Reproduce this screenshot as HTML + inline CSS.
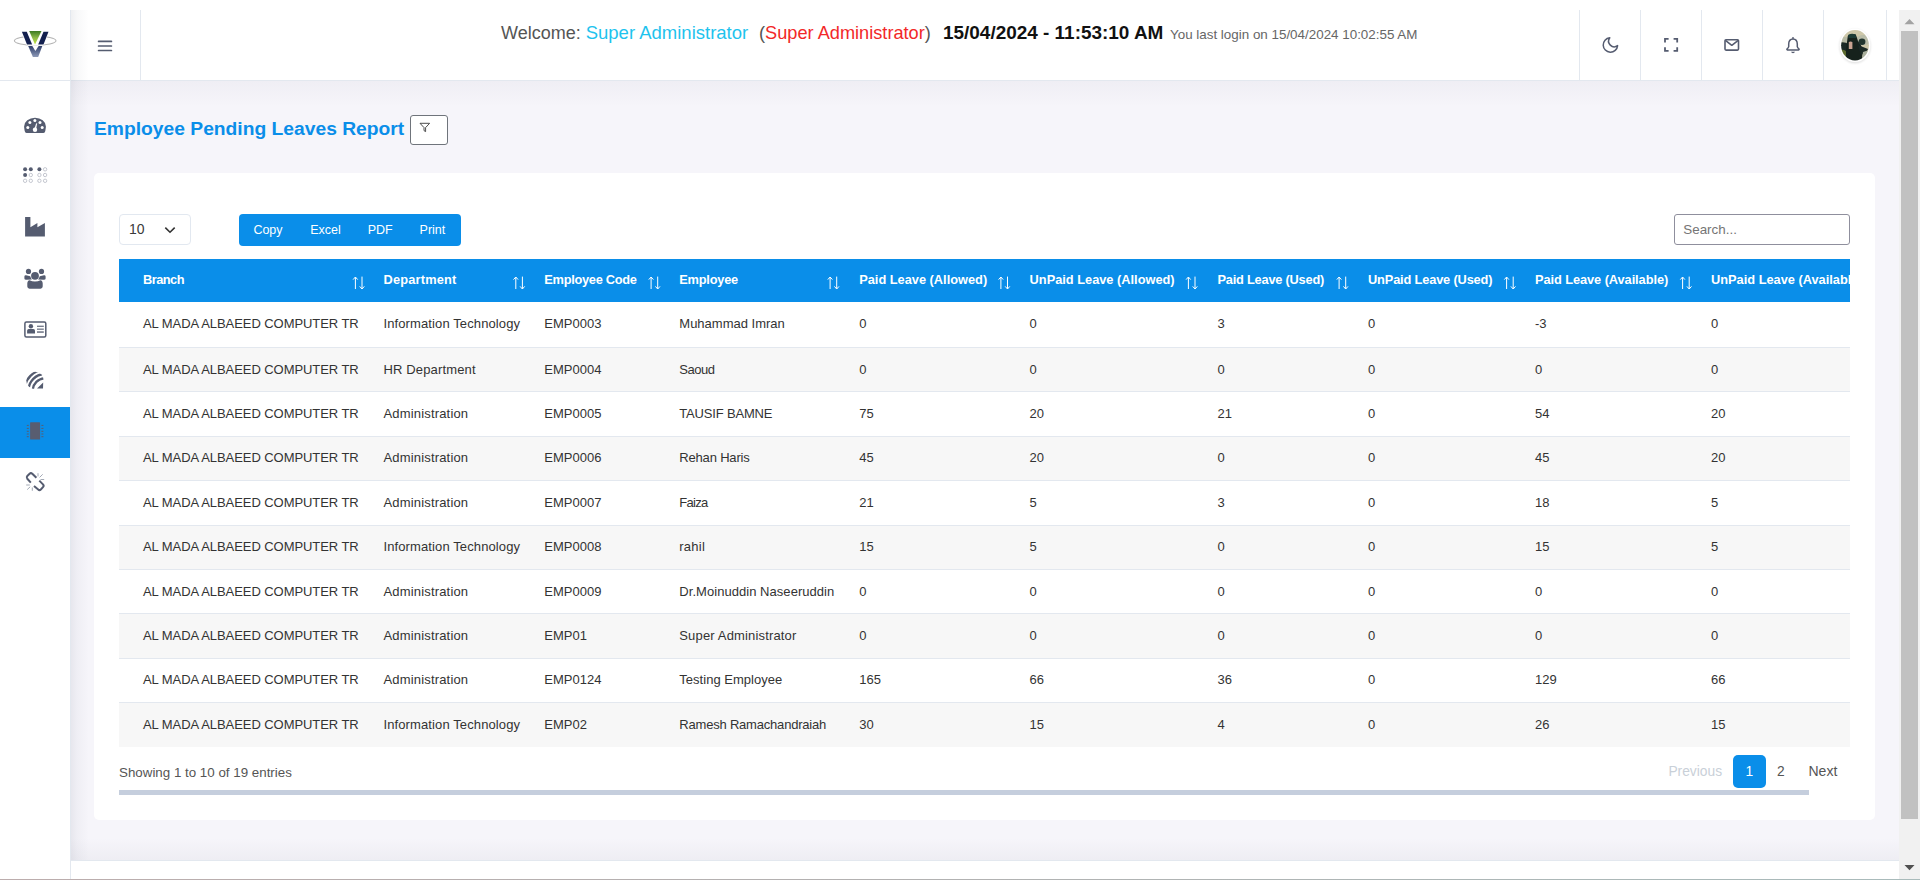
<!DOCTYPE html>
<html><head><meta charset="utf-8"><title>Employee Pending Leaves Report</title>
<style>
*{box-sizing:border-box;margin:0;padding:0}
html,body{width:1920px;height:880px;overflow:hidden;background:#fff;font-family:"Liberation Sans",sans-serif;color:#333}
.a{position:absolute}
.t{position:absolute;white-space:nowrap;line-height:1}
#sidebar{position:absolute;left:0;top:10px;width:71px;height:870px;background:#fff;border-right:1px solid #e3e8ef}
#logo{position:absolute;left:0;top:0;width:70px;height:71px;border-bottom:1px solid #e3e8ef}
.nav{position:absolute;left:0;width:70px;height:51px}
.nav svg{position:absolute;left:0;top:0;overflow:visible}
.nav.active{background:#0a8ee9}
#header{position:absolute;left:71px;top:10px;width:1828px;height:71px;background:#fff;border-bottom:1px solid #e3e8ef}
#content{position:absolute;left:71px;top:81px;width:1828px;height:779px;background:#f6f5fa}
#footer{position:absolute;left:71px;top:860px;width:1828px;height:20px;background:#fff;border-top:1px solid #e3e8ef}
#scroll{position:absolute;left:1899px;top:10px;width:21px;height:870px;background:#f1f1f1}
.vl{position:absolute;top:0;width:1px;height:70px;background:#e3e8ef}
#card{position:absolute;left:94px;top:173px;width:1781px;height:647px;background:#fff;border-radius:5px}
.hdr{position:absolute;top:259px;height:43px;background:#0a8ee9;left:119px;width:1731px;overflow:hidden}
.hc{position:absolute;top:0;height:43px;color:#fff;font-weight:bold;font-size:12.8px;white-space:nowrap}
.hc span{position:absolute;left:0;top:14.5px;line-height:1}
.sort{position:absolute;top:17px;width:14px;height:14px}
.row{position:absolute;left:119px;width:1731px;overflow:hidden}
.row.even{background:#f7f7f7}
.row .c{position:absolute;white-space:nowrap;font-size:13px;color:#333;line-height:1}

</style></head>
<body>
<div id="sidebar"><div id="logo"></div></div>
<div class="a" style="left:0;top:407px;width:70px;height:51px;background:#0a8ee9"></div>
<svg class="a" style="left:0;top:0" width="70" height="880" viewBox="0 0 70 880">
 <defs>
  <linearGradient id="lg1" x1="0" y1="0" x2="0" y2="1"><stop offset="0" stop-color="#3d7a23"/><stop offset="0.5" stop-color="#8db84a"/><stop offset="1" stop-color="#c6e83a"/></linearGradient>
  <linearGradient id="lg2" x1="0" y1="0" x2="0" y2="1"><stop offset="0" stop-color="#2f3f6a"/><stop offset="1" stop-color="#8e9ab8"/></linearGradient>
  <clipPath id="dishclip"><circle cx="35" cy="380.4" r="8.7"/></clipPath>
 </defs>
 <!-- logo -->
 <ellipse cx="35.2" cy="40.7" rx="20.8" ry="4.6" fill="none" stroke="#b5b5b5" stroke-width="1.1"/>
 <polygon points="21,31 49.4,31 43.9,45.2 26.6,45.2" fill="#fff"/>
 <polygon points="27.6,45.4 42.9,45.4 38.6,57.8 32.4,57.8" fill="#fff"/>
 <polygon points="21.9,31.7 26.8,31.7 32.1,44.4 27,44.4" fill="#13204f"/>
 <polygon points="43.5,31.7 48.5,31.7 43.5,44.4 38.2,44.4" fill="#13204f"/>
 <polygon points="29.2,31 41.5,31 35,44.6" fill="url(#lg1)"/>
 <polygon points="28.2,46 42.3,46 38.2,57.1 32.9,57.1" fill="url(#lg2)"/>
 <polygon points="32.3,46 38.6,46 35.4,51" fill="#fff"/>
 <!-- gauge -->
 <path d="M26.6,132.9 H43.4 Q45,132.9 45.3,131 C45.7,129 45.9,127.6 45.9,126.6 A10.85,8.8 0 0 0 24.1,126.6 C24.1,127.6 24.3,129 24.7,131 Q25,132.9 26.6,132.9 Z" fill="#555c70"/>
 <g fill="#fff">
  <circle cx="34.9" cy="120.6" r="1.5"/><circle cx="29.9" cy="122.6" r="1.5"/><circle cx="40" cy="122.6" r="1.5"/>
  <circle cx="27.8" cy="127.6" r="1.5"/><circle cx="42.2" cy="127.6" r="1.5"/>
  <circle cx="35" cy="129.7" r="2.2"/>
  <polygon points="36.2,123.3 37.2,123.5 36,129.5 34.2,129.3"/>
 </g>
 <!-- braille -->
 <g fill="#555c70">
  <circle cx="25.1" cy="169.3" r="2"/><circle cx="30.8" cy="169.3" r="2"/><circle cx="25.1" cy="175" r="2"/><circle cx="39.4" cy="169.3" r="2"/>
 </g>
 <g fill="none" stroke="#aeb2bd" stroke-width="0.7">
  <circle cx="30.8" cy="175" r="1.7"/><circle cx="25.1" cy="180.8" r="1.7"/><circle cx="30.8" cy="180.8" r="1.7"/>
  <circle cx="45.1" cy="169.3" r="1.7"/><circle cx="39.4" cy="175" r="1.7"/><circle cx="45.1" cy="175" r="1.7"/><circle cx="39.4" cy="180.8" r="1.7"/><circle cx="45.1" cy="180.8" r="1.7"/>
 </g>
 <!-- industry -->
 <path d="M25.1,217.1 H30.4 V227.3 L37.4,223.1 V227.3 L44.9,223.1 V236.6 H25.1 Z" fill="#555c70"/>
 <!-- users -->
 <g fill="#555c70">
  <circle cx="28.5" cy="271.4" r="2.6"/><circle cx="41.5" cy="271.4" r="2.6"/>
  <circle cx="35" cy="275.8" r="3.9"/>
  <path d="M24.4,276.6 Q24.6,275 26,275.3 L30.2,276.3 Q30.8,278.4 31.9,279.5 L26.5,279.8 Q24.3,279.9 24.4,278.4 Z"/>
  <path d="M45.6,276.6 Q45.4,275 44,275.3 L39.8,276.3 Q39.2,278.4 38.1,279.5 L43.5,279.8 Q45.7,279.9 45.6,278.4 Z"/>
  <path d="M27.3,283.6 Q27.4,280.6 29.6,280.3 Q32,281.6 35,281.6 Q38,281.6 40.4,280.3 Q42.6,280.6 42.7,283.6 L42.7,286.6 Q42.6,288.7 40.5,288.7 H29.5 Q27.4,288.7 27.3,286.6 Z"/>
 </g>
 <!-- id card -->
 <g>
  <rect x="24.9" y="321.9" width="20.9" height="15.2" rx="1.5" fill="none" stroke="#555c70" stroke-width="1.5"/>
  <circle cx="30.9" cy="326.3" r="2.2" fill="#555c70"/>
  <path d="M27.1,330.6 Q27.3,329 28.7,329 H33.4 Q34.9,329 35,330.6 V333.6 H27.1 Z" fill="#555c70"/>
  <rect x="37" y="325.7" width="6.8" height="1.1" fill="#555c70"/>
  <rect x="37" y="328.6" width="6.8" height="1.1" fill="#555c70"/>
  <rect x="37" y="331.4" width="6.8" height="1.3" fill="#555c70"/>
 </g>
 <!-- dish / feed -->
 <g clip-path="url(#dishclip)" fill="none" stroke="#555c70" stroke-width="2.3">
  <circle cx="45" cy="390.5" r="12.2"/><circle cx="45" cy="390.5" r="16.5"/><circle cx="45" cy="390.5" r="20.6"/>
 </g>
 <polygon points="37,388.6 43.2,382.6 43,388.6" fill="#555c70"/>
 <!-- chip (active) -->
 <rect x="30.1" y="422.3" width="10" height="17.2" rx="0.6" fill="#585d70"/>
 <g stroke="#585d70" stroke-width="1">
  <line x1="26.8" y1="425.4" x2="28.8" y2="425.4"/><line x1="26.8" y1="428.4" x2="28.8" y2="428.4"/><line x1="26.8" y1="431.3" x2="28.8" y2="431.3"/><line x1="26.8" y1="434" x2="28.8" y2="434"/><line x1="26.8" y1="436.7" x2="28.8" y2="436.7"/>
  <line x1="41.4" y1="425.4" x2="43.4" y2="425.4"/><line x1="41.4" y1="428.4" x2="43.4" y2="428.4"/><line x1="41.4" y1="431.3" x2="43.4" y2="431.3"/><line x1="41.4" y1="434" x2="43.4" y2="434"/><line x1="41.4" y1="436.7" x2="43.4" y2="436.7"/>
 </g>
 <!-- unlink -->
 <g fill="none" stroke="#555c70" stroke-width="2" stroke-linecap="butt" stroke-linejoin="round">
  <path d="M36.4,477.8 L32.3,473.7 Q30.9,472.5 29.6,473.7 L27.3,476 Q26.1,477.4 27.3,478.8 L30.8,482.6"/>
  <path d="M39.3,480.6 L43,484.4 Q44.3,485.8 43,487.1 L40.8,489.5 Q39.5,490.8 38.2,489.6 L34,486.1"/>
 </g>
 <g stroke="#9aa0ae" stroke-width="0.9">
  <line x1="38" y1="473.2" x2="38" y2="476.4"/><line x1="39.6" y1="477.4" x2="42.7" y2="474.3"/><line x1="40.5" y1="479.5" x2="44.2" y2="479.5"/>
  <line x1="26.2" y1="485" x2="29.8" y2="485"/><line x1="27.2" y1="489.6" x2="30.2" y2="486.8"/><line x1="32.3" y1="487.5" x2="32.3" y2="490.8"/>
 </g>
</svg>
<div id="header"></div>
<div class="vl" style="left:140px;top:10px"></div>
<div class="vl" style="left:1579px;top:10px"></div>
<div class="vl" style="left:1640px;top:10px"></div>
<div class="vl" style="left:1701px;top:10px"></div>
<div class="vl" style="left:1762px;top:10px"></div>
<div class="vl" style="left:1823px;top:10px"></div>
<div class="vl" style="left:1886px;top:10px"></div>
<svg class="a" style="left:0;top:0" width="1920" height="80" viewBox="0 0 1920 80">
 <g stroke="#555c70" stroke-width="1.7" stroke-linecap="round">
  <line x1="98.6" y1="41.4" x2="111.4" y2="41.4"/><line x1="98.6" y1="46" x2="111.4" y2="46"/><line x1="98.6" y1="50.5" x2="111.4" y2="50.5"/>
 </g>
 <!-- moon -->
 <path d="M21 12.79A9 9 0 1 1 11.21 3 7 7 0 0 0 21 12.79z" transform="translate(1600.8,35.4) scale(0.8)" fill="none" stroke="#555c70" stroke-width="1.9" stroke-linejoin="round"/>
 <!-- expand -->
 <g fill="none" stroke="#555c70" stroke-width="1.8">
  <path d="M1665,42.5 V38.9 H1668.6"/><path d="M1673.6,38.9 H1677.2 V42.5"/><path d="M1677.2,47.3 V50.9 H1673.6"/><path d="M1668.6,50.9 H1665 V47.3"/>
 </g>
 <!-- mail -->
 <g fill="none" stroke="#555c70" stroke-width="1.6" stroke-linejoin="round">
  <rect x="1725" y="39.7" width="13.5" height="10.4" rx="1"/>
  <path d="M1725.4,40.4 L1731.8,45.3 L1738.2,40.4"/>
 </g>
 <!-- bell -->
 <path d="M1793,38.9 C1796.3,38.9 1797.3,41.6 1797.3,44.2 V46.6 Q1797.5,47.7 1798.9,48.9 Q1799.5,49.8 1798.6,49.9 H1787.4 Q1786.5,49.8 1787.1,48.9 Q1788.5,47.7 1788.7,46.6 V44.2 C1788.7,41.6 1789.7,38.9 1793,38.9 Z" fill="none" stroke="#555c70" stroke-width="1.5" stroke-linejoin="round"/>
 <path d="M1791,51.8 H1795 Q1794.5,53.2 1793,53.2 Q1791.5,53.2 1791,51.8 Z" fill="#555c70"/>
 <circle cx="1793" cy="38" r="0.9" fill="#555c70"/>
 <!-- avatar -->
 <defs>
  <radialGradient id="av" cx="0.5" cy="0.35" r="0.7"><stop offset="0" stop-color="#a8a890"/><stop offset="1" stop-color="#c9c4a0"/></radialGradient>
  <clipPath id="avc"><ellipse cx="1855" cy="45.25" rx="13.9" ry="15.3"/></clipPath>
  <filter id="avb" x="-10%" y="-10%" width="120%" height="120%"><feGaussianBlur stdDeviation="0.5"/></filter>
  <filter id="avs" x="-50%" y="-50%" width="200%" height="200%"><feGaussianBlur stdDeviation="1.2"/></filter>
 </defs>
 <ellipse cx="1855" cy="46.2" rx="15.6" ry="17" fill="#000" opacity="0.12" filter="url(#avs)"/>
 <ellipse cx="1855" cy="45.3" rx="15.4" ry="16.8" fill="#fff"/>
 <g clip-path="url(#avc)">
  <g filter="url(#avb)">
  <rect x="1838" y="28" width="34" height="36" fill="#cdc7a9"/>
  <ellipse cx="1864" cy="40" rx="8" ry="5" fill="#b9bca8"/>
  <ellipse cx="1845" cy="40" rx="5" ry="3" fill="#b6b9a4"/>
  <path d="M1838,43 Q1844,41 1849,44 L1849,64 L1838,64 Z" fill="#1e2c27"/>
  <path d="M1841,50 Q1845,49 1847,53 L1846,58 L1840,58 Z" fill="#5c6a2e"/>
  <path d="M1847.8,36 Q1851.5,33 1855.8,34.5 L1858,41 Q1862.5,46 1862.5,52 L1862,64 L1847,64 Q1845.5,55 1846.2,48 Z" fill="#14221f"/>
  <path d="M1848,35 Q1851.5,33 1855.5,34.5 L1856.5,38 L1848.5,38 Z" fill="#1b3a35"/>
  <ellipse cx="1862" cy="41.8" rx="3.4" ry="3.3" fill="#20342f"/>
  <path d="M1858,45 L1868,49 L1866,53 L1861,55 Z" fill="#1d2925"/>
  <path d="M1863,52 L1869,50 L1869,60 L1862,60 Z" fill="#a9af9c"/>
  <path d="M1848.8,42 Q1850.6,41 1852.4,42 L1852.4,48.9 L1848.8,48.9 Z" fill="#c8a291"/>
  </g>
 </g>
</svg>
<div class="t" style="left:501px;top:23.8px;font-size:18px;color:#555">Welcome: <span style="color:#1ec3ee;font-size:18.5px">Super Administrator</span></div>
<div class="t" style="left:759px;top:23.8px;font-size:18.2px;color:#555">(<span style="color:#f22828">Super Administrator</span>)</div>
<div class="t" style="left:943px;top:23.8px;font-size:18.95px;font-weight:bold;color:#111">15/04/2024 - 11:53:10 AM</div>
<div class="t" style="left:1170px;top:27.8px;font-size:13.4px;color:#666">You last login on 15/04/2024 10:02:55 AM</div>
<div id="content"></div>
<div class="a" style="left:71px;top:10px;width:20px;height:870px;background:linear-gradient(to right,rgba(20,30,60,0.065),rgba(20,30,60,0.03) 6px,rgba(20,30,60,0) 18px)"></div>
<div class="a" style="left:71px;top:838px;width:1828px;height:22px;background:linear-gradient(to bottom,rgba(20,30,60,0),rgba(20,30,60,0.035))"></div>
<div class="a" style="left:71px;top:81px;width:1828px;height:26px;background:linear-gradient(to bottom,rgba(30,20,60,0.03),rgba(30,20,60,0))"></div>
<div id="card"></div>
<div class="t" style="left:94px;top:119px;font-size:19.25px;font-weight:bold;color:#0a8ee9">Employee Pending Leaves Report</div>
<div class="a" style="left:410px;top:115px;width:38px;height:30px;border:1px solid #6f747b;border-radius:3px;background:#fff"></div>
<svg class="a" style="left:0;top:0;overflow:visible" width="1" height="1"><path d="M420,123.3 H429.6 L425.6,127.6 V131.6 L424,130.6 V127.6 Z" fill="none" stroke="#3a3a3a" stroke-width="0.9" stroke-linejoin="round"/></svg>
<div class="a" style="left:119px;top:214px;width:72px;height:31px;border:1px solid #e2e8f0;border-radius:4px;background:#fff"></div>
<div class="t" style="left:129px;top:222.3px;font-size:14px;color:#3a3a3a">10</div>
<svg class="a" style="left:0;top:0;overflow:visible" width="1" height="1"><path d="M165.3,227.6 L170,232.2 L174.7,227.6" fill="none" stroke="#333" stroke-width="1.6"/></svg>
<div class="a" style="left:239px;top:214px;width:222px;height:32px;background:#0a8ee9;border-radius:4px"></div>
<div class="t" style="left:253.4px;top:224px;font-size:12.5px;color:#fff">Copy</div>
<div class="t" style="left:310.2px;top:224px;font-size:12.5px;color:#fff">Excel</div>
<div class="t" style="left:367.7px;top:224px;font-size:12.5px;color:#fff">PDF</div>
<div class="t" style="left:419.6px;top:224px;font-size:12.5px;color:#fff">Print</div>
<div class="a" style="left:1674px;top:214px;width:176px;height:31px;border:1px solid #8f8f9d;border-radius:3px;background:#fff"></div>
<div class="t" style="left:1683.3px;top:222.8px;font-size:13.4px;color:#757575">Search...</div>
<div class="hdr">
<div class="t" style="left:24px;top:14.5px;font-size:12.8px;font-weight:bold;color:#fff;letter-spacing:-0.519px;">Branch</div>
<div class="t" style="left:264.5px;top:14.5px;font-size:12.8px;font-weight:bold;color:#fff;letter-spacing:0.188px;">Department</div>
<div class="t" style="left:425.29999999999995px;top:14.5px;font-size:12.8px;font-weight:bold;color:#fff;letter-spacing:-0.276px;">Employee Code</div>
<div class="t" style="left:560.3px;top:14.5px;font-size:12.8px;font-weight:bold;color:#fff;letter-spacing:-0.224px;">Employee</div>
<div class="t" style="left:740.2px;top:14.5px;font-size:12.8px;font-weight:bold;color:#fff;letter-spacing:-0.001px;">Paid Leave (Allowed)</div>
<div class="t" style="left:910.5999999999999px;top:14.5px;font-size:12.8px;font-weight:bold;color:#fff;letter-spacing:-0.003px;">UnPaid Leave (Allowed)</div>
<div class="t" style="left:1098.5px;top:14.5px;font-size:12.8px;font-weight:bold;color:#fff;letter-spacing:-0.216px;">Paid Leave (Used)</div>
<div class="t" style="left:1249px;top:14.5px;font-size:12.8px;font-weight:bold;color:#fff;letter-spacing:-0.155px;">UnPaid Leave (Used)</div>
<div class="t" style="left:1416px;top:14.5px;font-size:12.8px;font-weight:bold;color:#fff;letter-spacing:-0.07px;">Paid Leave (Available)</div>
<div class="t" style="left:1592px;top:14.5px;font-size:12.8px;font-weight:bold;color:#fff;">UnPaid Leave (Available)</div>
<svg class="a" style="left:0;top:0;overflow:visible" width="1" height="1"><g stroke="#fff" stroke-width="1" fill="none">
<path d="M236.4,30 V18.2 M234.10000000000002,20.6 L236.4,18 L238.70000000000002,20.6"/>
<path d="M243.0,17.6 V29.8 M240.70000000000002,27.4 L243.0,30 L245.3,27.4"/>
<path d="M396.80000000000007,30 V18.2 M394.50000000000006,20.6 L396.80000000000007,18 L399.1,20.6"/>
<path d="M403.40000000000003,17.6 V29.8 M401.1,27.4 L403.40000000000003,30 L405.70000000000005,27.4"/>
<path d="M532.1,30 V18.2 M529.8,20.6 L532.1,18 L534.4,20.6"/>
<path d="M538.7,17.6 V29.8 M536.4,27.4 L538.7,30 L541.0,27.4"/>
<path d="M711.1,30 V18.2 M708.8,20.6 L711.1,18 L713.4,20.6"/>
<path d="M717.7,17.6 V29.8 M715.4,27.4 L717.7,30 L720.0,27.4"/>
<path d="M881.9,30 V18.2 M879.5999999999999,20.6 L881.9,18 L884.1999999999999,20.6"/>
<path d="M888.5,17.6 V29.8 M886.1999999999999,27.4 L888.5,30 L890.8,27.4"/>
<path d="M1069.3999999999999,30 V18.2 M1067.1,20.6 L1069.3999999999999,18 L1071.7,20.6"/>
<path d="M1076.0,17.6 V29.8 M1073.7,27.4 L1076.0,30 L1078.3,27.4"/>
<path d="M1220.1,30 V18.2 M1217.8,20.6 L1220.1,18 L1222.4,20.6"/>
<path d="M1226.7,17.6 V29.8 M1224.4,27.4 L1226.7,30 L1229.0,27.4"/>
<path d="M1387.6,30 V18.2 M1385.3,20.6 L1387.6,18 L1389.9,20.6"/>
<path d="M1394.2,17.6 V29.8 M1391.9,27.4 L1394.2,30 L1396.5,27.4"/>
<path d="M1563.6,30 V18.2 M1561.3,20.6 L1563.6,18 L1565.9,20.6"/>
<path d="M1570.2,17.6 V29.8 M1567.9,27.4 L1570.2,30 L1572.5,27.4"/>
</g></svg>
</div>
<div class="row" style="top:302.60px;height:44.4px;">
<div class="c" style="left:24px;top:14.6px;letter-spacing:-0.067px;">AL MADA ALBAEED COMPUTER TR</div>
<div class="c" style="left:264.5px;top:14.6px;letter-spacing:0.11px;">Information Technology</div>
<div class="c" style="left:425.29999999999995px;top:14.6px;">EMP0003</div>
<div class="c" style="left:560.3px;top:14.6px;letter-spacing:0.001px;">Muhammad Imran</div>
<div class="c" style="left:740.2px;top:14.6px;">0</div>
<div class="c" style="left:910.5999999999999px;top:14.6px;">0</div>
<div class="c" style="left:1098.5px;top:14.6px;">3</div>
<div class="c" style="left:1249px;top:14.6px;">0</div>
<div class="c" style="left:1416px;top:14.6px;">-3</div>
<div class="c" style="left:1592px;top:14.6px;">0</div>
</div>
<div class="row even" style="top:347.00px;height:44.4px;border-top:1px solid #e3e8ef;">
<div class="c" style="left:24px;top:14.6px;letter-spacing:-0.067px;">AL MADA ALBAEED COMPUTER TR</div>
<div class="c" style="left:264.5px;top:14.6px;letter-spacing:0.141px;">HR Department</div>
<div class="c" style="left:425.29999999999995px;top:14.6px;">EMP0004</div>
<div class="c" style="left:560.3px;top:14.6px;letter-spacing:-0.473px;">Saoud</div>
<div class="c" style="left:740.2px;top:14.6px;">0</div>
<div class="c" style="left:910.5999999999999px;top:14.6px;">0</div>
<div class="c" style="left:1098.5px;top:14.6px;">0</div>
<div class="c" style="left:1249px;top:14.6px;">0</div>
<div class="c" style="left:1416px;top:14.6px;">0</div>
<div class="c" style="left:1592px;top:14.6px;">0</div>
</div>
<div class="row" style="top:391.40px;height:44.4px;border-top:1px solid #e3e8ef;">
<div class="c" style="left:24px;top:14.6px;letter-spacing:-0.067px;">AL MADA ALBAEED COMPUTER TR</div>
<div class="c" style="left:264.5px;top:14.6px;letter-spacing:0.171px;">Administration</div>
<div class="c" style="left:425.29999999999995px;top:14.6px;">EMP0005</div>
<div class="c" style="left:560.3px;top:14.6px;letter-spacing:-0.174px;">TAUSIF BAMNE</div>
<div class="c" style="left:740.2px;top:14.6px;">75</div>
<div class="c" style="left:910.5999999999999px;top:14.6px;">20</div>
<div class="c" style="left:1098.5px;top:14.6px;">21</div>
<div class="c" style="left:1249px;top:14.6px;">0</div>
<div class="c" style="left:1416px;top:14.6px;">54</div>
<div class="c" style="left:1592px;top:14.6px;">20</div>
</div>
<div class="row even" style="top:435.80px;height:44.4px;border-top:1px solid #e3e8ef;">
<div class="c" style="left:24px;top:14.6px;letter-spacing:-0.067px;">AL MADA ALBAEED COMPUTER TR</div>
<div class="c" style="left:264.5px;top:14.6px;letter-spacing:0.171px;">Administration</div>
<div class="c" style="left:425.29999999999995px;top:14.6px;">EMP0006</div>
<div class="c" style="left:560.3px;top:14.6px;letter-spacing:-0.177px;">Rehan Haris</div>
<div class="c" style="left:740.2px;top:14.6px;">45</div>
<div class="c" style="left:910.5999999999999px;top:14.6px;">20</div>
<div class="c" style="left:1098.5px;top:14.6px;">0</div>
<div class="c" style="left:1249px;top:14.6px;">0</div>
<div class="c" style="left:1416px;top:14.6px;">45</div>
<div class="c" style="left:1592px;top:14.6px;">20</div>
</div>
<div class="row" style="top:480.20px;height:44.4px;border-top:1px solid #e3e8ef;">
<div class="c" style="left:24px;top:14.6px;letter-spacing:-0.067px;">AL MADA ALBAEED COMPUTER TR</div>
<div class="c" style="left:264.5px;top:14.6px;letter-spacing:0.171px;">Administration</div>
<div class="c" style="left:425.29999999999995px;top:14.6px;">EMP0007</div>
<div class="c" style="left:560.3px;top:14.6px;letter-spacing:-0.699px;">Faiza</div>
<div class="c" style="left:740.2px;top:14.6px;">21</div>
<div class="c" style="left:910.5999999999999px;top:14.6px;">5</div>
<div class="c" style="left:1098.5px;top:14.6px;">3</div>
<div class="c" style="left:1249px;top:14.6px;">0</div>
<div class="c" style="left:1416px;top:14.6px;">18</div>
<div class="c" style="left:1592px;top:14.6px;">5</div>
</div>
<div class="row even" style="top:524.60px;height:44.4px;border-top:1px solid #e3e8ef;">
<div class="c" style="left:24px;top:14.6px;letter-spacing:-0.067px;">AL MADA ALBAEED COMPUTER TR</div>
<div class="c" style="left:264.5px;top:14.6px;letter-spacing:0.11px;">Information Technology</div>
<div class="c" style="left:425.29999999999995px;top:14.6px;">EMP0008</div>
<div class="c" style="left:560.3px;top:14.6px;letter-spacing:0.23px;">rahil</div>
<div class="c" style="left:740.2px;top:14.6px;">15</div>
<div class="c" style="left:910.5999999999999px;top:14.6px;">5</div>
<div class="c" style="left:1098.5px;top:14.6px;">0</div>
<div class="c" style="left:1249px;top:14.6px;">0</div>
<div class="c" style="left:1416px;top:14.6px;">15</div>
<div class="c" style="left:1592px;top:14.6px;">5</div>
</div>
<div class="row" style="top:569.00px;height:44.4px;border-top:1px solid #e3e8ef;">
<div class="c" style="left:24px;top:14.6px;letter-spacing:-0.067px;">AL MADA ALBAEED COMPUTER TR</div>
<div class="c" style="left:264.5px;top:14.6px;letter-spacing:0.171px;">Administration</div>
<div class="c" style="left:425.29999999999995px;top:14.6px;">EMP0009</div>
<div class="c" style="left:560.3px;top:14.6px;letter-spacing:0.046px;">Dr.Moinuddin Naseeruddin</div>
<div class="c" style="left:740.2px;top:14.6px;">0</div>
<div class="c" style="left:910.5999999999999px;top:14.6px;">0</div>
<div class="c" style="left:1098.5px;top:14.6px;">0</div>
<div class="c" style="left:1249px;top:14.6px;">0</div>
<div class="c" style="left:1416px;top:14.6px;">0</div>
<div class="c" style="left:1592px;top:14.6px;">0</div>
</div>
<div class="row even" style="top:613.40px;height:44.4px;border-top:1px solid #e3e8ef;">
<div class="c" style="left:24px;top:14.6px;letter-spacing:-0.067px;">AL MADA ALBAEED COMPUTER TR</div>
<div class="c" style="left:264.5px;top:14.6px;letter-spacing:0.171px;">Administration</div>
<div class="c" style="left:425.29999999999995px;top:14.6px;">EMP01</div>
<div class="c" style="left:560.3px;top:14.6px;letter-spacing:0.157px;">Super Administrator</div>
<div class="c" style="left:740.2px;top:14.6px;">0</div>
<div class="c" style="left:910.5999999999999px;top:14.6px;">0</div>
<div class="c" style="left:1098.5px;top:14.6px;">0</div>
<div class="c" style="left:1249px;top:14.6px;">0</div>
<div class="c" style="left:1416px;top:14.6px;">0</div>
<div class="c" style="left:1592px;top:14.6px;">0</div>
</div>
<div class="row" style="top:657.80px;height:44.4px;border-top:1px solid #e3e8ef;">
<div class="c" style="left:24px;top:14.6px;letter-spacing:-0.067px;">AL MADA ALBAEED COMPUTER TR</div>
<div class="c" style="left:264.5px;top:14.6px;letter-spacing:0.171px;">Administration</div>
<div class="c" style="left:425.29999999999995px;top:14.6px;">EMP0124</div>
<div class="c" style="left:560.3px;top:14.6px;letter-spacing:0.025px;">Testing Employee</div>
<div class="c" style="left:740.2px;top:14.6px;">165</div>
<div class="c" style="left:910.5999999999999px;top:14.6px;">66</div>
<div class="c" style="left:1098.5px;top:14.6px;">36</div>
<div class="c" style="left:1249px;top:14.6px;">0</div>
<div class="c" style="left:1416px;top:14.6px;">129</div>
<div class="c" style="left:1592px;top:14.6px;">66</div>
</div>
<div class="row even" style="top:702.20px;height:44.4px;border-top:1px solid #e3e8ef;">
<div class="c" style="left:24px;top:14.6px;letter-spacing:-0.067px;">AL MADA ALBAEED COMPUTER TR</div>
<div class="c" style="left:264.5px;top:14.6px;letter-spacing:0.11px;">Information Technology</div>
<div class="c" style="left:425.29999999999995px;top:14.6px;">EMP02</div>
<div class="c" style="left:560.3px;top:14.6px;letter-spacing:-0.202px;">Ramesh Ramachandraiah</div>
<div class="c" style="left:740.2px;top:14.6px;">30</div>
<div class="c" style="left:910.5999999999999px;top:14.6px;">15</div>
<div class="c" style="left:1098.5px;top:14.6px;">4</div>
<div class="c" style="left:1249px;top:14.6px;">0</div>
<div class="c" style="left:1416px;top:14.6px;">26</div>
<div class="c" style="left:1592px;top:14.6px;">15</div>
</div>
<div class="t" style="left:119px;top:766px;font-size:13.35px;color:#555">Showing 1 to 10 of 19 entries</div>
<div class="t" style="left:1668.4px;top:764.5px;font-size:13.8px;color:#c9d0d8">Previous</div>
<div class="a" style="left:1733px;top:755px;width:33px;height:33px;background:#0a8ee9;border-radius:5px"></div>
<div class="t" style="left:1745.5px;top:764.5px;font-size:13.8px;color:#fff">1</div>
<div class="t" style="left:1777px;top:764.5px;font-size:13.8px;color:#555">2</div>
<div class="t" style="left:1808.5px;top:763.8px;font-size:14px;color:#555">Next</div>
<div class="a" style="left:119px;top:790px;width:1690px;height:5px;background:#c5cedd"></div><div id="footer"></div>
<div id="scroll"></div>
<div class="a" style="left:1901px;top:31px;width:17px;height:788px;background:#c1c1c1"></div>
<svg class="a" style="left:1899px;top:10px" width="21" height="870">
 <polygon points="5.5,14.2 10.5,9 15.5,14.2" fill="#a3a3a3"/>
 <polygon points="5.5,855 15.5,855 10.5,860.2" fill="#505050"/>
</svg>
<div class="a" style="left:0;top:879px;width:1920px;height:1px;background:linear-gradient(to right,#bcadad,#b2b2b2 50%,#a9bbbb)"></div>
</body></html>
